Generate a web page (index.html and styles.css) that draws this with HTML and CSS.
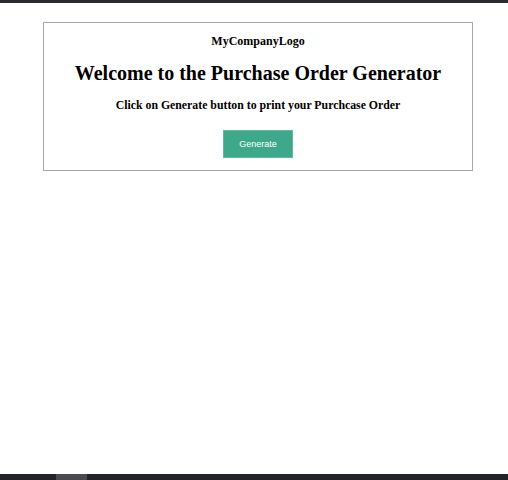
FILE: index.html
```html
<!DOCTYPE html>
<html>
<head>
<meta charset="utf-8">
<link rel="stylesheet" href="styles.css">
</head>
<body>
<div class="topbar"></div>
<main class="page">
  <section class="card">
    <div class="logo">MyCompanyLogo</div>
    <h1 class="title">Welcome to the Purchase Order Generator</h1>
    <h3 class="subtitle">Click on Generate button to print your Purchcase Order</h3>
    <button class="btn">Generate</button>
  </section>
</main>
<div class="bottombar"><span class="tab"></span></div>
</body>
</html>
```
FILE: styles.css
```css
html, body { margin: 0; padding: 0; height: 100%; }
body {
  display: flex;
  flex-direction: column;
  background: #fff;
  font-family: "Liberation Serif", "Times New Roman", serif;
  color: #000;
}
.topbar { height: 3px; background: #2b2b2f; flex: none; }
.page { flex: 1; padding: 19px 35px 0 43px; }
.card {
  border: 1px solid #a9a6a3;
  display: flex;
  flex-direction: column;
  align-items: center;
  padding: 11px 0 12px;
}
.logo { font-weight: bold; font-size: 12px; line-height: 15px; }
.title { font-size: 20px; line-height: 24px; margin: 12px 0 0; font-weight: bold; }
.subtitle { font-size: 11.8px; line-height: 15px; margin: 13px 0 0; font-weight: bold; }
.btn {
  margin-top: 17px;
  width: 70px;
  height: 28px;
  background: #3ea98a;
  border: 1px solid #5fb89c;
  color: #fff;
  font-family: "Liberation Sans", Arial, sans-serif;
  font-size: 9px;
  padding: 0;
}
.bottombar { height: 6px; background: #232428; flex: none; padding-left: 56px; display: flex; }
.tab { width: 31px; background: #4a4b50; }
```
